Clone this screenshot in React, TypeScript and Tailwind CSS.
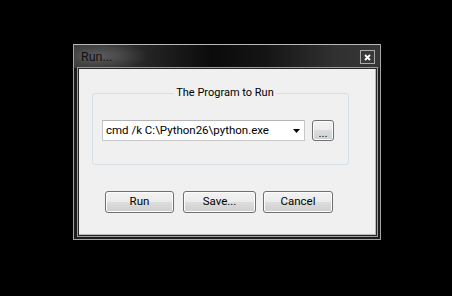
export default function App() {
  const btn =
    "h-[22px] rounded-[3px] border border-[#707070] shadow-[inset_0_0_0_1px_#fcfcfc] [background:linear-gradient(#f2f2f2_0%,#ebebeb_50%,#dddddd_50%,#cfcfcf_100%)] text-[11.5px] text-black flex items-center justify-center";
  return (
    <div
      className="w-[452px] h-[296px] bg-black pl-[73px] pt-[44px]"
      style={{ fontFamily: 'Roboto, "Liberation Sans", sans-serif' }}
    >
      <div className="w-[308px] h-[196px] border border-[#a4a4a4] border-t-[#b8b8b8] flex flex-col pl-[3px] pr-[2px] pb-[2px] [background:radial-gradient(ellipse_45px_16px_at_28px_11px,#5c5c5c,transparent),linear-gradient(90deg,#3a3a3a_0%,#262626_22%,#0b0b0b_45%,#141414_62%,#303030_85%,#363636_100%)_top/100%_23px_no-repeat,#1c1c1c]">
        <div className="h-[22px] -ml-[3px] -mr-[2px] pl-[7px] pr-[5px] flex items-start justify-between">
          <span className="text-[12.5px] leading-[22px] text-[#111111] [text-shadow:0_0_6px_rgba(120,120,120,0.6)] pt-[1px]">
            Run...
          </span>
          <div className="mt-[5px] w-[15px] h-[14px] border border-[#a8a8a8] bg-[#383838] flex items-center justify-center">
            <svg width="7" height="7" viewBox="0 0 7 7">
              <path d="M1 1L6 6M6 1L1 6" stroke="#ffffff" strokeWidth="1.8" />
            </svg>
          </div>
        </div>
        <div className="flex-1 border border-[#9a9a9a] flex">
          <div className="flex-1 border border-[#262626] flex">
            <div className="flex-1 bg-[#f0f0f0] border-r border-b border-[#b8b8b8] flex flex-col pl-[13px] pt-[17px]">
              <fieldset className="w-[257px] h-[79px] border border-[#d5dfe5] rounded-[3px] pl-[9px] pt-[20px]">
                <legend className="mx-auto px-[2px] text-[11px] leading-[14px] text-black">
                  The Program to Run
                </legend>
                <div className="flex items-start">
                  <div className="w-[203px] h-[21px] bg-white border border-[#c8c8c8] border-t-[#b4b4b4] flex items-center justify-between pl-[3px] pr-[4px]">
                    <span className="text-[11.5px] text-black leading-[19px]">
                      cmd /k C:\Python26\python.exe
                    </span>
                    <svg width="7" height="4" viewBox="0 0 7 4">
                      <path d="M0 0H7L3.5 4Z" fill="#000000" />
                    </svg>
                  </div>
                  <div className={"ml-[7px] w-[22px] !h-[21px] " + btn}>
                    <span className="leading-[12px] pt-[4px]">...</span>
                  </div>
                </div>
              </fieldset>
              <div className="flex mt-[26px] ml-[13px]">
                <div className={"w-[69px] " + btn}>Run</div>
                <div className={"w-[73px] ml-[9px] " + btn}>Save...</div>
                <div className={"w-[70px] ml-[7px] " + btn}>Cancel</div>
              </div>
            </div>
          </div>
        </div>
      </div>
    </div>
  );
}
